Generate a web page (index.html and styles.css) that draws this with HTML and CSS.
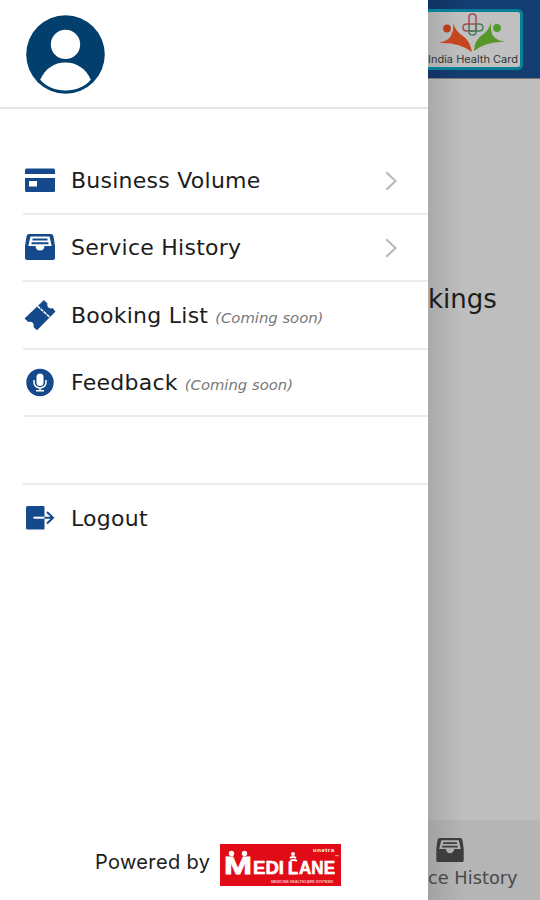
FILE: index.html
```
<!DOCTYPE html>
<html lang="en">
<head>
<meta charset="utf-8">
<title>Menu</title>
<link rel="stylesheet" href="styles.css">
</head>
<body>
<svg class="defs" width="0" height="0">
  <symbol id="tray" viewBox="0 0 30 26">
    <path fill="currentColor" fill-rule="evenodd" d="M4 0h22q2 0 2.400 2L30 12v12q0 2-2 2H2q-2 0-2-2V12L1.600 2Q2 0 4 0zM5.500 2.500L3.300 12h7.200q.5 4.500 4.500 4.500t4.500-4.500h7.200L24.500 2.500z"/>
    <path fill="currentColor" d="M7.500 4.500h15v2h-15zM6.500 8.300h17v2h-17z"/>
  </symbol>
</svg>
<div class="app">
  <aside class="drawer">
    <header class="profile">
      <svg class="avatar" viewBox="0 0 80 80">
        <circle cx="40" cy="40" r="38.800" fill="#033f6c"/>
        <circle cx="40" cy="30" r="14.500" fill="#fff"/>
        <path fill="#fff" d="M15 65C20 54 29 48 40 48s20 6 25 17C59 72 50 75.500 40 75.500S21 72 15 65z"/>
      </svg>
    </header>
    <nav class="menu">
      <div class="item">
        <svg class="icon" viewBox="0 0 30 30"><path fill="currentColor" fill-rule="evenodd" d="M1.500 3.500h27q1.500 0 1.500 1.500v4H0V5q0-1.500 1.500-1.500zM0 13h30V25.500q0 1.500-1.500 1.500h-27Q0 27 0 25.500zM4 16v5.500h8V16z"/></svg>
        <div class="row"><span class="label">Business Volume</span><svg class="chevron" viewBox="0 0 12 20"><path d="M1.300 1.300L10.500 10l-9.200 8.700"/></svg></div>
      </div>
      <div class="item">
        <svg class="icon" viewBox="0 0 30 30"><use href="#tray" y="2" width="30" height="26"/></svg>
        <div class="row"><span class="label">Service History</span><svg class="chevron" viewBox="0 0 12 20"><path d="M1.300 1.300L10.500 10l-9.200 8.700"/></svg></div>
      </div>
      <div class="item">
        <svg class="icon" viewBox="0 0 30 30"><path fill="currentColor" d="M19 0l3.500 3.500q-.8 3 1.300 4.300 1.900 1.200 3.700.2L30.500 11.500 12 30.300 8.500 27q1-2.500-.7-4.200T3.300 22L-.5 18.500z"/><path d="M12.500 6l12 11" stroke="#fff" stroke-width="1.500" stroke-dasharray="3.500 .7"/></svg>
        <div class="row"><span class="label">Booking List</span><em class="soon">(Coming soon)</em></div>
      </div>
      <div class="item">
        <svg class="icon" viewBox="0 0 30 30"><circle cx="15" cy="15.500" r="13.700" fill="currentColor"/><rect x="11.500" y="6.500" width="7" height="12.500" rx="3.500" fill="#fff"/><path d="M9 13V15.500a6 5.500 0 0 0 12 0V13M15 21v3M11 23.700h8" fill="none" stroke="#fff" stroke-width="1.500"/></svg>
        <div class="row"><span class="label">Feedback</span><em class="soon">(Coming soon)</em></div>
      </div>
      <div class="item"><div class="icon"></div><div class="row blank"></div></div>
      <div class="item last">
        <svg class="icon" viewBox="0 0 30 30"><path fill="currentColor" d="M2.500 3h16q1 0 1 1v21.500q0 1-1 1h-16q-1.500 0-1.500-1.500V4.500Q1 3 2.500 3z"/><path d="M8.500 14.700h11" stroke="#fff" stroke-width="2"/><path d="M19.500 14.700H28M22 9l6 5.700-6 5.700" fill="none" stroke="currentColor" stroke-width="2"/></svg>
        <div class="row"><span class="label">Logout</span></div>
      </div>
    </nav>
    <footer class="powered">
      <span class="by">Powered by</span>
      <svg class="medilane" viewBox="0 0 121 42">
        <rect width="121" height="42" fill="#e10b17"/>
        <g fill="#fff" font-family="Liberation Sans, sans-serif" font-weight="bold">
          <circle cx="11.500" cy="9.500" r="2.700"/><circle cx="24.500" cy="9.500" r="2.700"/>
          <text x="4" y="29.500" font-size="24" textLength="28" lengthAdjust="spacingAndGlyphs" stroke="#fff" stroke-width=".8">M</text>
          <text x="33" y="29.500" font-size="18.500" textLength="31" lengthAdjust="spacingAndGlyphs" stroke="#fff" stroke-width=".6">EDI</text>
          <text x="68" y="29.500" font-size="16" textLength="10" lengthAdjust="spacingAndGlyphs" stroke="#fff" stroke-width=".8">L</text>
          <text x="79" y="29.500" font-size="18.500" textLength="36" lengthAdjust="spacingAndGlyphs" stroke="#fff" stroke-width=".6">ANE</text>
          <text x="93" y="8" font-size="6" textLength="21">unetra</text>
          <text x="115" y="14" font-size="4">™</text>
          <text x="51" y="39" font-size="3.500" textLength="62" opacity=".75">MEDICINE HEALTHCARE SYSTEMS</text>
          <circle cx="73" cy="10" r="2"/>
        </g>
        <path d="M70 14q3-2 6 0M70 17q4-2 7 0" fill="none" stroke="#fff" stroke-width="1.800"/>
      </svg>
    </footer>
  </aside>
  <main class="behind">
    <div class="topbar">
      <div class="card">
        <svg viewBox="0 0 91 56">
          <g fill="none" stroke-width="1.500"><path stroke="#a44b50" d="M41 13V5q0-3 3.500-3T48 5v14h-9q-4 0-4-3.500t4-3.500h10"/><path stroke="#477d5b" d="M41 12v8q0 3 3.500 3t3.500-3v-8h3q4 0 4 3.500T51 19H41"/></g>
          <circle cx="19" cy="16.500" r="3.900" fill="#b93c20"/><circle cx="69" cy="16" r="3.900" fill="#519b2b"/>
          <path fill="#c4451f" d="M25 11q3 9 10 13 7 5 9 16-13-10-33-9 12-3 13-10 2-4 1-10z"/>
          <path fill="#57962b" d="M63 10q-1 11 3 15 4 4 12 5-20-1-32 9 0-10 8-16 7-4 9-13z"/>
          <text x="0" y="51" font-family="Inter, sans-serif" font-size="10" textLength="90" lengthAdjust="spacingAndGlyphs" fill="#333">India Health Card</text>
        </svg>
      </div>
    </div>
    <div class="content"><h1>kings</h1></div>
    <div class="tabbar"><svg class="tabicon" viewBox="0 0 30 26"><use href="#tray" width="30" height="26"/></svg><span>ce History</span></div>
  </main>
</div>
</body>
</html>
```
FILE: styles.css
```
* { box-sizing: border-box; }
body { margin: 0; font-family: "DejaVu Sans", sans-serif; color: #1c1c1c; background: #fff; }
.defs { display: block; }
.app { display: flex; width: 540px; height: 900px; overflow: hidden; }
.drawer { display: flex; flex-direction: column; width: 428px; flex: none; background: #fff; }
.profile { height: 109px; padding: 14px 0 0 25px; border-bottom: 2px solid #e4e4e4; }
.avatar { display: block; width: 81px; height: 81px; }
.menu { padding: 38px 0 0 23px; }
.item { display: flex; align-items: center; height: 67.500px; border-bottom: 2px solid #ebebeb; }
.item.last { border-bottom: 0; }
.icon { display: block; width: 30px; height: 30px; margin: 0 16px 0 2px; flex: none; color: #144a8b; overflow: visible; }
.row { display: flex; align-items: baseline; flex: 1; white-space: nowrap; padding-top: 2px; }
.label { font-size: 22px; line-height: 30px; letter-spacing: 0.250px; }
.soon { margin-left: 7px; font-size: 14.800px; color: #777; }
.chevron { width: 12px; height: 20px; margin: 0 31px 0 auto; align-self: center; fill: none; stroke: #b9b9b9; stroke-width: 2.200; }
.powered { display: flex; align-items: center; height: 42px; margin: auto 0 14px 95px; }
.by { width: 125px; font: 20px "Inter", sans-serif; line-height: 36px; padding-bottom: 6px; letter-spacing: 0.350px; white-space: nowrap; }
.medilane { width: 121px; height: 42px; flex: none; }
.behind { display: flex; flex-direction: column; width: 112px; overflow: hidden; background: linear-gradient(90deg, #aaa, #bebebe 35px); }
.topbar { height: 79px; flex: none; padding-top: 9px; background: linear-gradient(90deg, #123263, #133d70 35px); border-bottom: 1px solid #777; }
.card { width: 95px; height: 61px; border: 3px solid #087f99; border-left: 0; border-radius: 0 5px 5px 0; background: linear-gradient(90deg, #adadad, #c0c0c0 35px); }
.card svg { display: block; width: 91px; height: 56px; }
.content { flex: 1; padding-top: 203px; }
h1 { margin: 0; font-size: 26px; font-weight: 400; line-height: 34px; }
.tabbar { height: 80px; flex: none; padding-top: 18px; background: linear-gradient(90deg, #a2a2a2, #b5b5b5 35px); color: #484848; font-size: 17.800px; white-space: nowrap; }
.tabicon { display: block; width: 28px; height: 24px; margin: 0 0 5px 8px; color: #3d3d3d; }
```
